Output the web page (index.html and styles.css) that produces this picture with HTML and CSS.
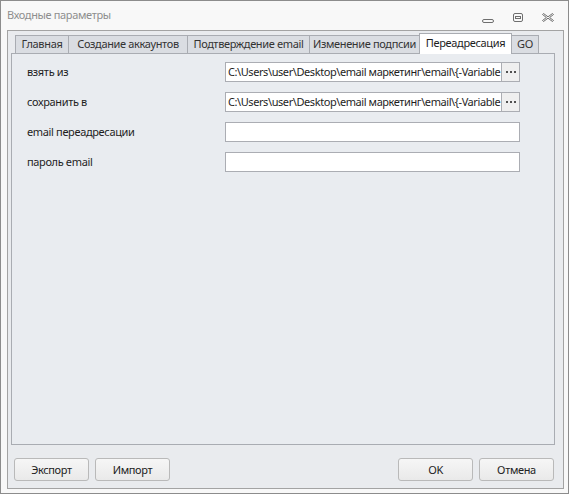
FILE: index.html
```html
<!DOCTYPE html>
<html lang="ru">
<head>
  <meta charset="UTF-8" />
  <title>Входные параметры</title>
  <link rel="stylesheet" href="styles.css">
</head>
<body>
  <div class="window">
    <div class="titlebar">
      <div class="title">Входные параметры</div>
      <div class="controls">
        <span class="control">
          <svg width="12" height="10" viewBox="0 0 12 10"><rect x="0.5" y="6.5" width="11" height="3" rx="1.5" fill="none" stroke="#6e6e6e"/></svg>
        </span>
        <span class="control">
          <svg width="12" height="10" viewBox="0 0 12 10"><rect x="1.5" y="0.5" width="9" height="8" rx="1.5" fill="none" stroke="#6e6e6e"/><rect x="3.5" y="3.5" width="5" height="2" fill="none" stroke="#6e6e6e"/></svg>
        </span>
        <span class="control">
          <svg width="12" height="10" viewBox="0 0 12 10"><polygon points="0.5,1.5 1.5,0.5 6,3.8 10.5,0.5 11.5,1.5 7.6,4.5 11.5,7.5 10.5,8.5 6,5.2 1.5,8.5 0.5,7.5 4.4,4.5" fill="none" stroke="#6e6e6e"/></svg>
        </span>
      </div>
    </div>

    <div class="client">
      <div class="tabs">
        <div class="tab">Главная</div>
        <div class="tab">Создание аккаунтов</div>
        <div class="tab">Подтверждение email</div>
        <div class="tab">Изменение подпсии</div>
        <div class="tab active">Переадресация</div>
        <div class="tab">GO</div>
      </div>

      <div class="panel">
        <div class="row">
          <label>взять из</label>
          <div class="path-field">
            <div class="field">C:\Users\user\Desktop\email маркетинг\email\{-Variable</div>
            <div class="browse"><svg width="10" height="2" viewBox="0 0 10 2"><rect x="0" y="0" width="2" height="2" fill="#505050"/><rect x="4" y="0" width="2" height="2" fill="#505050"/><rect x="8" y="0" width="2" height="2" fill="#505050"/></svg></div>
          </div>
        </div>
        <div class="row">
          <label>сохранить в</label>
          <div class="path-field">
            <div class="field">C:\Users\user\Desktop\email маркетинг\email\{-Variable</div>
            <div class="browse"><svg width="10" height="2" viewBox="0 0 10 2"><rect x="0" y="0" width="2" height="2" fill="#505050"/><rect x="4" y="0" width="2" height="2" fill="#505050"/><rect x="8" y="0" width="2" height="2" fill="#505050"/></svg></div>
          </div>
        </div>
        <div class="row">
          <label>email переадресации</label>
          <div class="field"></div>
        </div>
        <div class="row">
          <label>пароль email</label>
          <div class="field"></div>
        </div>
      </div>

      <div class="footer">
        <div class="group">
          <button class="btn">Экспорт</button>
          <button class="btn">Импорт</button>
        </div>
        <div class="group">
          <button class="btn">OK</button>
          <button class="btn">Отмена</button>
        </div>
      </div>
    </div>
  </div>
</body>
</html>
```

FILE: styles.css
```css
* {
  box-sizing: border-box;
}
body {
  margin: 0;
  background: #ffffff;
  font-family: "Noto Sans", "Open Sans", sans-serif;
  font-size: 11px;
  letter-spacing: -0.35px;
  color: #1e1e1e;
}
.window {
  width: 569px;
  height: 494px;
  border: 1px solid #8c8c8c;
  background: #f8f8f8;
  padding: 0 4px 4px 6px;
  display: flex;
  flex-direction: column;
}
.titlebar {
  height: 29px;
  display: flex;
  align-items: center;
  justify-content: space-between;
}
.title {
  color: #8e8e8e;
  padding-bottom: 2px;
}
.controls {
  display: flex;
  margin-right: 1px;
  padding-top: 4px;
}
.control {
  width: 30px;
  display: flex;
  justify-content: center;
}
.control svg {
  display: block;
}
.client {
  flex: 1;
  border: 1px solid #a3a3a3;
  background: #e9ebee;
  padding: 2px 8px 0 3px;
  display: flex;
  flex-direction: column;
}
.tabs {
  display: flex;
  align-items: flex-end;
  height: 20px;
  padding-left: 4px;
}
.tab {
  height: 18px;
  margin-right: -1px;
  border: 1px solid #a9acb2;
  border-bottom: none;
  background: #dadde2;
  color: #333;
  text-align: center;
  line-height: 16px;
  white-space: nowrap;
}
.tab:nth-child(1) { width: 54px; }
.tab:nth-child(2) { width: 120px; }
.tab:nth-child(3) { width: 123px; }
.tab:nth-child(4) { width: 111px; }
.tab:nth-child(5) { width: 93px; }
.tab:nth-child(6) { width: 28px; }
.tab.active {
  height: 21px;
  margin-bottom: -1px;
  background: #ffffff;
  color: #1e1e1e;
  position: relative;
  z-index: 1;
  line-height: 18px;
}
.panel {
  height: 392px;
  border: 1px solid #a9acb2;
  background: #e9ecf0;
  padding: 8px 0 0 15px;
  display: flex;
  flex-direction: column;
  gap: 10px;
}
.row {
  display: grid;
  grid-template-columns: 198px 295px;
  height: 20px;
}
.row label {
  align-self: center;
  padding-bottom: 1px;
}
.field {
  height: 20px;
  border: 1px solid #abadb3;
  background: #ffffff;
  padding: 0 2px;
  line-height: 18px;
  white-space: nowrap;
  overflow: hidden;
}
.path-field {
  display: flex;
}
.path-field .field {
  flex: 1;
  min-width: 0;
  letter-spacing: -0.42px;
  padding: 0 1px 0 2px;
}
.browse {
  width: 19px;
  height: 20px;
  margin-left: -1px;
  border: 1px solid #abadb3;
  background: #efefef;
  display: flex;
  align-items: center;
  justify-content: center;
}
.footer {
  display: flex;
  justify-content: space-between;
  margin-top: 13px;
  padding: 0 1px 0 3px;
}
.group {
  display: flex;
  gap: 6px;
}
.btn {
  width: 75px;
  height: 23px;
  border: 1px solid #b9b9b9;
  border-radius: 3px;
  background: linear-gradient(#f6f6f6, #e9e9e9);
  color: #222;
  font-family: inherit;
  font-size: 11px;
  letter-spacing: inherit;
  padding: 0;
}
```
